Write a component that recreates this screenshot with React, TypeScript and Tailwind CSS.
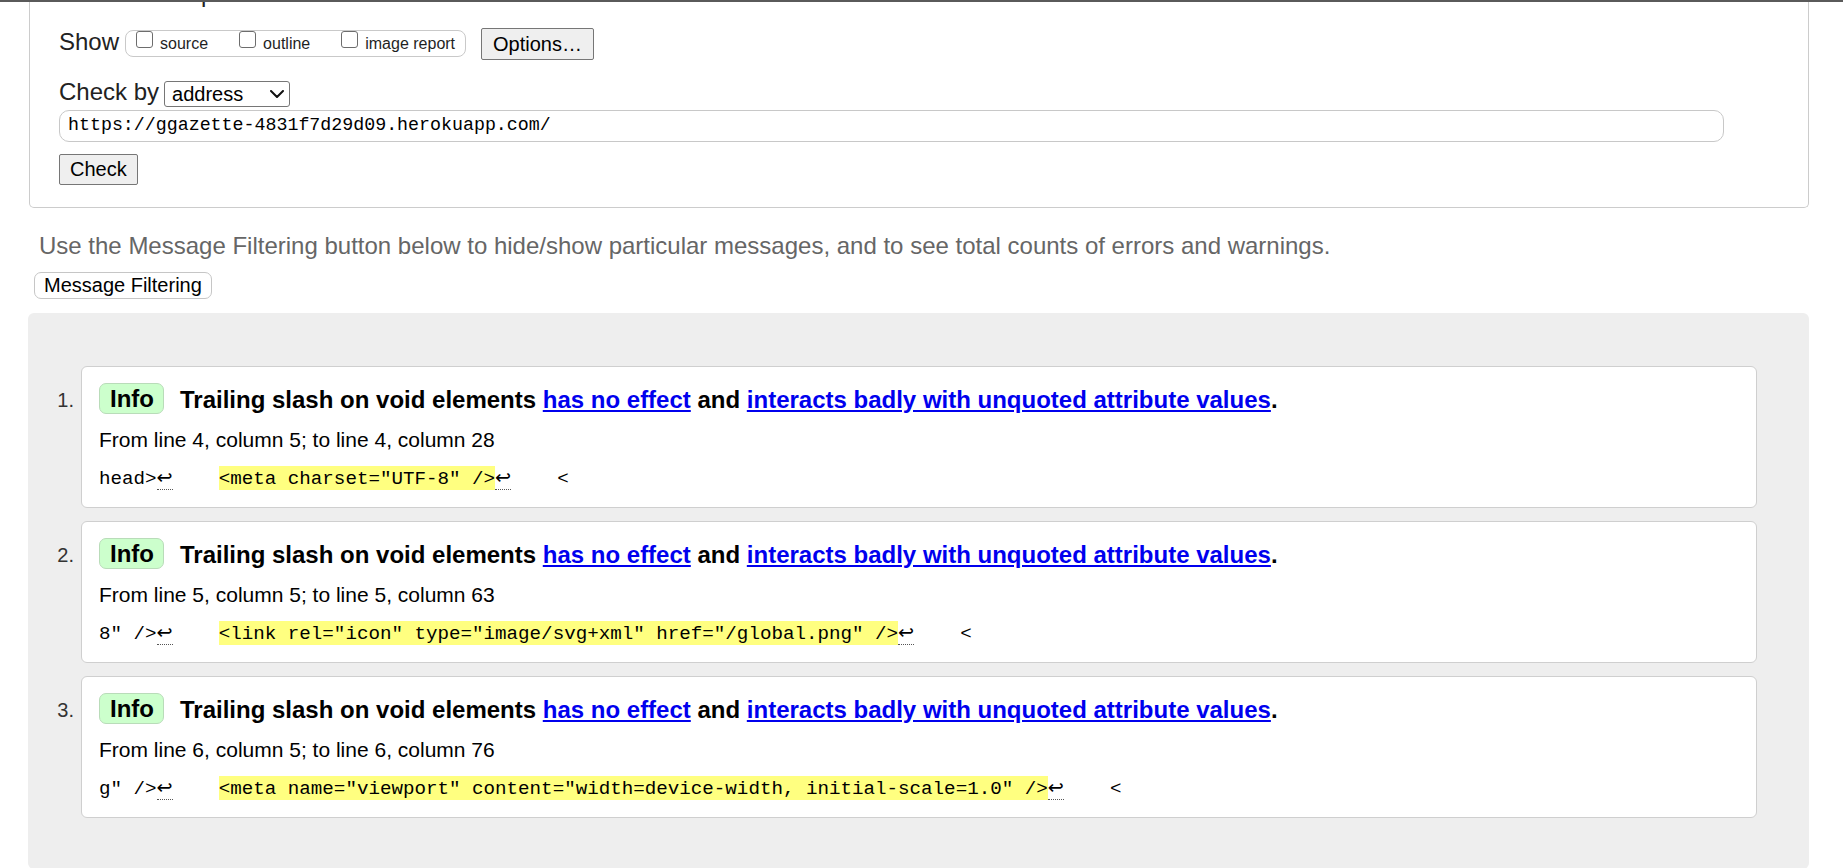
import React from 'react';

const messages = [
  {
    n: 1,
    from: 'From line 4, column 5; to line 4, column 28',
    before: 'head>',
    code: '<meta charset="UTF-8" />',
  },
  {
    n: 2,
    from: 'From line 5, column 5; to line 5, column 63',
    before: '8" />',
    code: '<link rel="icon" type="image/svg+xml" href="/global.png" />',
  },
  {
    n: 3,
    from: 'From line 6, column 5; to line 6, column 76',
    before: 'g" />',
    code: '<meta name="viewport" content="width=device-width, initial-scale=1.0" />',
  },
];

function Checkbox({ label, className }: { label: string; className?: string }) {
  return (
    <div className={`flex items-start ${className ?? ''}`}>
      <span className="h-[17px] w-[17px] rounded-[3px] border border-[#6d6d6d] bg-white" />
      <span className="ml-[7px] mt-[4px] text-[16px] leading-[18px] text-[#1f1f1f]">{label}</span>
    </div>
  );
}

function Arrow() {
  return (
    <span className="border-b border-dotted border-[#555] font-['DejaVu_Sans',sans-serif]">↩</span>
  );
}

function Message({ m }: { m: (typeof messages)[number] }) {
  return (
    <div className="flex items-start">
      {/* list number */}
      <span className="mt-[22px] w-[53px] pr-[7px] text-right text-[20px] leading-[24px] text-[#333]">
        {m.n}.
      </span>
      <div className="flex-1 rounded-[6px] border border-[#cfcfcf] bg-white pb-[16px] pl-[17px] pt-[16px]">
        <div className="flex items-start">
          <strong className="h-[31px] rounded-[7px] border border-[#b9dcb9] bg-[#ccffcc] pl-[10px] pr-[9px] text-[24px] font-bold leading-[29px] text-black">
            Info
          </strong>
          <p className="ml-[16px] mt-[3px] whitespace-nowrap text-[24px] font-bold leading-[28px] text-black">
            Trailing slash on void elements{' '}
            <a className="text-[#0000ee] underline">has no effect</a> and{' '}
            <a className="text-[#0000ee] underline">interacts badly with unquoted attribute values</a>.
          </p>
        </div>
        <p className="mt-[14px] text-[21px] leading-[24px] text-black">{m.from}</p>
        <p className="mt-[14px] whitespace-pre font-['Liberation_Mono',monospace] text-[19.2px] leading-[24px] text-black">
          {m.before}
          <Arrow />
          {'    '}
          <mark className="bg-[#ffff80] pt-[2px] text-black">{m.code}</mark>
          <Arrow />
          {'    <'}
        </p>
      </div>
    </div>
  );
}

export default function App() {
  return (
    <div className="h-[868px] overflow-hidden bg-white font-['Liberation_Sans',Arial,sans-serif] text-black">
      <div className="h-[2px] bg-[#5a5a5a]" />

      <div className="ml-[28px] w-[1781px]">
        {/* Checker input box (scrolled, top cut off) */}
        <div className="ml-[1px] w-[1780px] rounded-b-[5px] border-x border-b border-[#cccccc] pb-[22px] pl-[29px]">
          <div className="h-[6px] overflow-hidden pl-[26px]">
            <div className="-mt-[22px] text-[24px] leading-[28px] text-[#222]">Checker Input</div>
          </div>

          {/* Show row */}
          <div className="mt-[20px] flex items-start">
            <span className="text-[24px] leading-[28px] text-[#222]">Show</span>
            <div className="ml-[6px] mt-[2px] flex h-[27px] items-start rounded-[8px] border border-[#c9c9c9] pl-[10px] pr-[10px]">
              <Checkbox label="source" />
              <Checkbox label="outline" className="ml-[31px]" />
              <Checkbox label="image report" className="ml-[31px]" />
            </div>
            <button className="ml-[15px] h-[32px] rounded-[2px] border border-[#767676] bg-[#efefef] px-[11px] text-[20px] leading-[30px] text-black">
              Options…
            </button>
          </div>

          {/* Check by row */}
          <div className="mt-[18px] flex items-start">
            <span className="text-[24px] leading-[28px] text-[#222]">Check by</span>
            <div className="ml-[5px] mt-[3px] flex h-[26px] w-[126px] items-center rounded-[3px] border border-[#767676] bg-white pl-[7px] text-[20px] leading-[24px] text-black">
              <span>address</span>
              <svg className="ml-auto mr-[5px]" width="14" height="8" viewBox="0 0 14 8" fill="none">
                <path d="M1 1l6 6 6-6" stroke="#111" strokeWidth="2" strokeLinecap="round" strokeLinejoin="round" />
              </svg>
            </div>
          </div>

          <div className="mt-[3px] flex h-[32px] w-[1665px] items-center rounded-[10px] border border-[#c8c8c8] bg-white pl-[8px] font-['Liberation_Mono',monospace] text-[18.3px] text-black">
            https://ggazette-4831f7d29d09.herokuapp.com/
          </div>

          <button className="mt-[12px] h-[31px] rounded-[2px] border border-[#767676] bg-[#efefef] px-[10px] text-[20px] leading-[29px] text-black">
            Check
          </button>
        </div>

        <p className="ml-[11px] mt-[24px] whitespace-nowrap text-[24px] leading-[28px] text-[#666]">
          Use the Message Filtering button below to hide/show particular messages, and to see total counts of errors and warnings.
        </p>

        <button className="ml-[6px] mt-[12px] h-[27px] rounded-[7px] border border-[#c6c6c6] bg-white px-[9px] text-[20px] leading-[25px] text-black">
          Message Filtering
        </button>

        {/* Results */}
        <div className="mt-[14px] flex flex-col gap-[13px] rounded-[6px] bg-[#eeeeee] pb-[51px] pr-[52px] pt-[53px]">
          {messages.map((m) => (
            <Message key={m.n} m={m} />
          ))}
        </div>
      </div>
    </div>
  );
}
